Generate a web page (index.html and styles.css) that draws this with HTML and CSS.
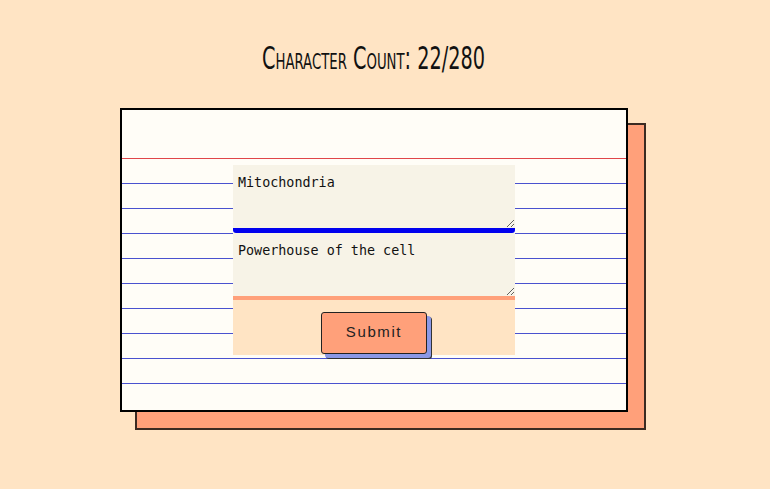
FILE: index.html
```html
<!DOCTYPE html>
<html lang="en">
<head>
<meta charset="utf-8">
<title>Flashcard</title>
<link rel="stylesheet" href="styles.css">
</head>
<body>
<main class="page">
  <h1 class="title"><span class="title-text">Character Count: 22/280</span></h1>
  <div class="stage">
    <div class="card-shadow"></div>
    <div class="card">
      <form class="form">
        <textarea class="field field-front">Mitochondria</textarea>
        <textarea class="field field-back">Powerhouse of the cell</textarea>
        <div class="actions">
          <button type="button" class="submit">Submit</button>
        </div>
      </form>
    </div>
  </div>
</main>
</body>
</html>
```

FILE: styles.css
```css
html, body {
  margin: 0;
  padding: 0;
}

body {
  background: #ffe4c4;
  font-family: "Liberation Sans", Arial, sans-serif;
  min-height: 489px;
}

.page {
  padding-top: 36px;
  padding-bottom: 40px;
}

.title {
  margin: 0 0 28px;
  padding-right: 22px;
  height: 44px;
  display: flex;
  align-items: center;
  justify-content: center;
  font-weight: normal;
}

.title-text {
  display: inline-block;
  font-family: "DejaVu Sans Condensed", "DejaVu Sans", sans-serif;
  font-variant: small-caps;
  font-size: 32px;
  color: #111;
  transform: scaleX(0.67);
  white-space: nowrap;
}

.stage {
  position: relative;
  margin-left: 120px;
  width: 526px;
  height: 322px;
}

.card-shadow {
  position: absolute;
  left: 15px;
  top: 15px;
  width: 511px;
  height: 307px;
  box-sizing: border-box;
  background: #ffa07a;
  border: 2px solid #3b2a22;
}

.card {
  position: relative;
  z-index: 1;
  box-sizing: border-box;
  width: 508px;
  height: 304px;
  border: 2px solid #000;
  background-color: #fffdf7;
  background-image:
    linear-gradient(to bottom, #fffdf7 0, #fffdf7 48px, #e0464a 48px, #e0464a 49px, transparent 49px, transparent 290px, #fffdf7 290px),
    linear-gradient(to bottom, transparent 0, transparent 23px, #4a52cf 23px, #4a52cf 24px, transparent 24px);
  background-size: 100% 100%, 100% 25px;
  background-repeat: no-repeat, repeat-y;
  display: flex;
  align-items: center;
  justify-content: center;
}

.form {
  width: 282px;
  display: flex;
  flex-direction: column;
  margin: 0;
}

.field {
  display: block;
  box-sizing: border-box;
  width: 282px;
  margin: 0;
  border: 0;
  outline: none;
  background: #f7f3e7;
  color: #111;
  font-family: "DejaVu Sans Mono", monospace;
  font-size: 13.4px;
  padding: 10px 5px 6px;
}

.field-front {
  height: 68px;
  border-bottom: 5px solid #0000ee;
  border-radius: 0 0 3px 3px;
}

.field-back {
  height: 67px;
  border-bottom: 4px solid #ffa07a;
}

.actions {
  height: 55px;
  box-sizing: border-box;
  padding-top: 12px;
  background: #ffe4c4;
  display: flex;
  justify-content: center;
  align-items: flex-start;
}

.submit {
  width: 106px;
  height: 42px;
  background: #ffa07a;
  border: 1px solid #222;
  border-radius: 3px;
  box-shadow: 4px 4px 0 #8b98e6, 5px 5px 0 #333;
  font-family: "Liberation Sans", Arial, sans-serif;
  font-size: 15px;
  letter-spacing: 1.6px;
  color: #222;
  padding: 0 0 3px;
  cursor: pointer;
}
```
